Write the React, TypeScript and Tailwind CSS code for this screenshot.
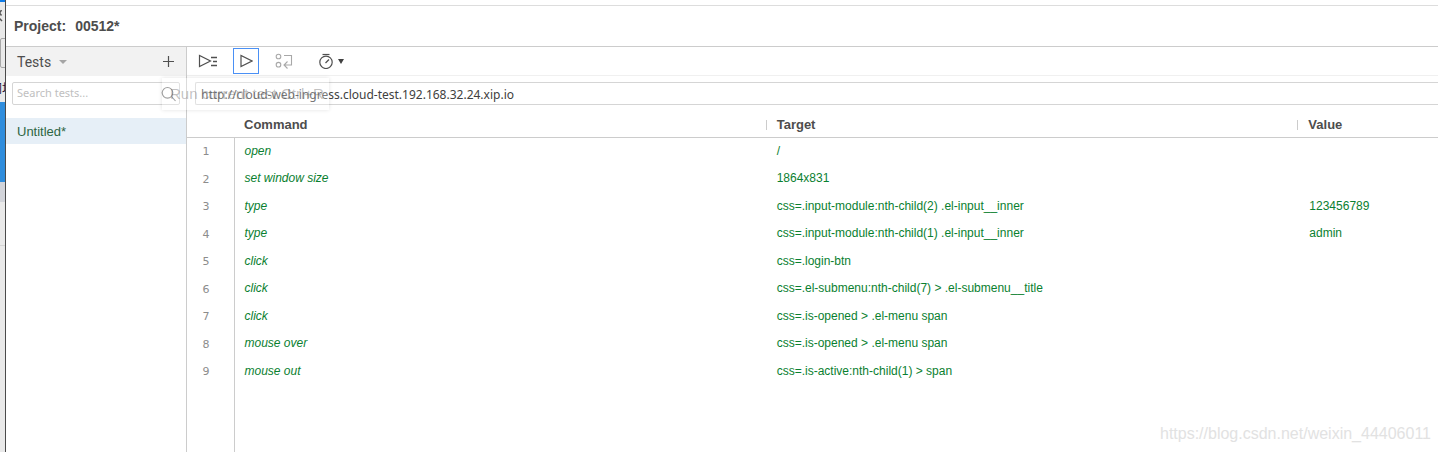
import React, { useState } from 'react';

interface Step {
  command: string;
  target: string;
  value?: string;
}

const steps: Step[] = [
  { command: 'open', target: '/' },
  { command: 'set window size', target: '1864x831' },
  { command: 'type', target: 'css=.input-module:nth-child(2) .el-input__inner', value: '123456789' },
  { command: 'type', target: 'css=.input-module:nth-child(1) .el-input__inner', value: 'admin' },
  { command: 'click', target: 'css=.login-btn' },
  { command: 'click', target: 'css=.el-submenu:nth-child(7) > .el-submenu__title' },
  { command: 'click', target: 'css=.is-opened > .el-menu span' },
  { command: 'mouse over', target: 'css=.is-opened > .el-menu span' },
  { command: 'mouse out', target: 'css=.is-active:nth-child(1) > span' },
];

const RunAllIcon = () => (
  <svg width="20" height="16" viewBox="0 0 20 16" fill="none" stroke="#505050">
    <path d="M1.5 2.5v11l11-5.5z" strokeWidth="1.2" />
    <path d="M13 4.500h6M15 8.500h4M13 12.500h6" strokeWidth="1.4" />
  </svg>
);

const RunIcon = () => (
  <svg width="14" height="16" viewBox="0 0 14 16" fill="none" stroke="#505050" strokeWidth="1.2">
    <path d="M2 2.500v11l11-5.500z" />
  </svg>
);

const StepIcon = () => (
  <svg width="18" height="16" viewBox="0 0 18 16" fill="none" stroke="#a8a8a8" strokeWidth="1.1">
    <circle cx="3.5" cy="3.5" r="2.3" />
    <circle cx="3.5" cy="11.7" r="2.3" />
    <path d="M9 2.500h7.500v9.500h-7M12.500 8.500l-3.500 3.500 3.500 3.500" />
  </svg>
);

const SpeedIcon = () => (
  <svg width="16" height="16" viewBox="0 0 16 16" fill="none" stroke="#505050" strokeWidth="1.2">
    <path d="M4.500 1.500h7" />
    <circle cx="8" cy="9.300" r="6.200" />
    <path d="M7.500 10l3.500-3.500" />
  </svg>
);

const SearchIcon = () => (
  <svg width="16" height="16" viewBox="0 0 16 16" fill="none" stroke="#777777" strokeWidth="1.1">
    <circle cx="6.500" cy="6.800" r="5.300" />
    <path d="M10.500 10.500l4 4.500" />
  </svg>
);

// sliver of the window behind this one
const BackWindow = () => (
  <div className="flex w-[5px] shrink-0 flex-col overflow-hidden bg-[#e9e9e9]">
    <div className="h-0.5 bg-[#0f7ce8]" />
    <svg className="mt-2 shrink-0" width="5" height="12" viewBox="0 0 5 12" fill="none" stroke="#555">
      <path d="M1.500 0l-2 3 2 2.500M-1 8l3 3" strokeWidth="1.500" />
    </svg>
    <div className="mt-4 -mr-1 h-[30px] shrink-0 rounded-l-xs border border-[#a8a8a8]" />
    <div className="mt-2.5 -ml-2.5 h-5 w-8 shrink-0 font-['Noto_Sans_CJK_SC',sans-serif] text-xs leading-5 text-[#221133]">网址</div>
    <div className="mt-1 h-20 shrink-0 bg-[#2f8ddd]" />
    <div className="h-5 shrink-0 bg-[#d2d4da]" />
    <div className="h-11 shrink-0 border-b border-[#d4d4d4]" />
  </div>
);

const Sidebar = () => {
  const [query, setQuery] = useState('');

  return (
    <aside className="flex w-[181px] shrink-0 flex-col border-r border-[#cccccc]">
      <div className="flex h-[29px] items-center justify-between bg-[#f2f2f2] pr-3 pl-[11px]">
        <button className="flex items-center gap-2 font-['Roboto',sans-serif] text-sm">
          Tests
          <svg width="8" height="4" viewBox="0 0 8 4" fill="#a5a5a5">
            <path d="M0 0h8L4 4z" />
          </svg>
        </button>
        <button aria-label="Add new test">
          <svg width="11" height="11" viewBox="0 0 11 11" stroke="#505050" strokeWidth="1.200">
            <path d="M5.500 0v11M0 5.500h11" />
          </svg>
        </button>
      </div>
      <div className="mx-1.5 mt-1.5 flex h-[23px] items-center rounded-xs border border-[#d5d5d5] pr-0.5 pl-1">
        <input
          aria-label="Search tests"
          value={query}
          onChange={(e) => setQuery(e.target.value)}
          placeholder="Search tests..."
          className="min-w-0 flex-1 font-['Noto_Sans',sans-serif] text-[11px] outline-none placeholder:text-[#c0c0c0]"
        />
        <SearchIcon />
      </div>
      <ul className="mt-[13px]">
        <li>
          <a href="#untitled" className="flex h-[26px] items-center bg-[#e6eff7] pt-0.5 pl-[11px] text-[13px] text-[#2e6644]">
            Untitled*
          </a>
        </li>
      </ul>
    </aside>
  );
};

const Toolbar = () => (
  <div className="flex h-[29px] items-center border-b border-[#f0f0f0] pl-[11px]">
    <button aria-label="Run all tests">
      <RunAllIcon />
    </button>
    <button
      aria-label="Run current test"
      className="ml-[15px] flex h-[26px] w-[26px] items-center justify-center border border-[#4a90f5]"
    >
      <RunIcon />
    </button>
    <button aria-label="Step over" className="ml-4">
      <StepIcon />
    </button>
    <button aria-label="Test speed" className="ml-[25px] flex items-center gap-1">
      <SpeedIcon />
      <svg width="6" height="5" viewBox="0 0 6 5" fill="#404040">
        <path d="M0 0h6L3 5z" />
      </svg>
    </button>
  </div>
);

const StepTable = () => (
  <table className="w-full table-fixed border-collapse text-left">
    <colgroup>
      <col className="w-[47px]" />
      <col className="w-[42.5%]" />
      <col className="w-[42.5%]" />
      <col />
    </colgroup>
    <thead>
      <tr className="h-8 border-b border-[#cccccc] text-[13px] leading-4">
        <td />
        <th className="pt-2 pl-2.5">Command</th>
        <th className="pt-2">
          <div className="flex items-center gap-2.5">
            <span className="h-2.5 w-px bg-[#cccccc]" />
            Target
          </div>
        </th>
        <th className="pt-2">
          <div className="flex items-center gap-2.5">
            <span className="h-2.5 w-px bg-[#cccccc]" />
            Value
          </div>
        </th>
      </tr>
    </thead>
    <tbody className="text-xs text-[#0a8030]">
      {steps.map((step, i) => (
        <tr key={i} className="h-[27px] even:h-7">
          <td className="border-r border-[#cccccc] pt-1 pr-6 text-right font-['DejaVu_Sans',sans-serif] text-[11px] text-[#8c8c8c]">
            {i + 1}
          </td>
          <td className="pl-2.5 italic">{step.command}</td>
          <td className="pl-[11px]">{step.target}</td>
          <td className="pl-3">{step.value}</td>
        </tr>
      ))}
      <tr>
        <td className="border-r border-[#cccccc]" />
        <td colSpan={3} />
      </tr>
    </tbody>
  </table>
);

export default function App() {
  const [url, setUrl] = useState('http://cloud-web-ingress.cloud-test.192.168.32.24.xip.io');

  return (
    <div className="relative flex min-h-screen bg-white font-['Liberation_Sans',Arial,sans-serif] text-[#4d4d4d]">
      <BackWindow />
      <div className="flex min-w-0 flex-1 flex-col border-l border-[#4a4a4a]">
        <div className="h-1.5 border-b border-[#dddddd]" />
        <header className="flex h-[41px] items-center gap-[9px] border-b border-[#cccccc] pl-2 text-sm font-bold">
          <span>Project:</span>
          <span>00512*</span>
        </header>
        <div className="flex flex-1">
          <Sidebar />
          <main className="flex min-w-0 flex-1 flex-col">
            <Toolbar />
            <input
              aria-label="Playback base URL"
              value={url}
              onChange={(e) => setUrl(e.target.value)}
              className="mt-1.5 ml-2 h-[23px] rounded-l-xs border border-r-0 border-[#d5d5d5] pt-0.5 pl-[5px] font-['Noto_Sans',sans-serif] text-xs text-[#404040] outline-none"
            />
            <div className="grid flex-1">
              <StepTable />
            </div>
          </main>
        </div>
      </div>

      {/* tooltip of the run button, fading out */}
      <div
        role="tooltip"
        className="pointer-events-none absolute top-[78px] left-[162px] flex h-8 w-[167px] items-center bg-white/30 pl-2 text-[15px] whitespace-nowrap text-[#505050]/35 shadow-[0_0_4px_rgba(0,0,0,0.12)]"
      >
        Run current test Ctrl+R
      </div>
      <div className="pointer-events-none absolute right-[7px] bottom-2 text-base leading-5 text-[#e2e2e2]">
        https://blog.csdn.net/weixin_44406011
      </div>
    </div>
  );
}
